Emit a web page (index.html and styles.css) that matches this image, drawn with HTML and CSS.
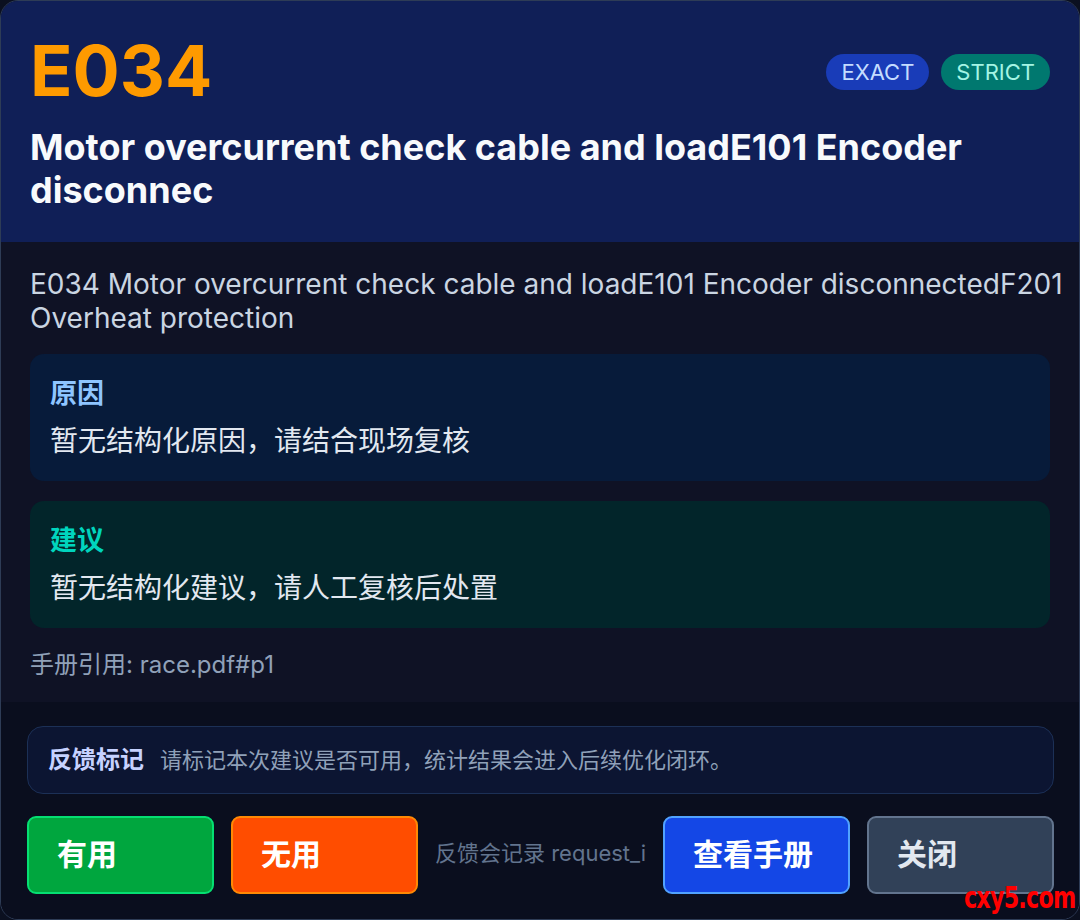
FILE: index.html
```html
<!DOCTYPE html>
<html lang="zh-CN">
<head>
    <meta charset="UTF-8">
    <meta name="viewport" content="width=device-width, initial-scale=1.0">
    <title>E034 故障详情</title>
    <link rel="stylesheet" href="styles.css">
</head>
<body>
    <div class="card">
        <div class="card-head">
            <div class="head-top">
                <div class="code">E034</div>
                <div class="badges">
                    <span class="badge badge-exact">EXACT</span>
                    <span class="badge badge-strict">STRICT</span>
                </div>
            </div>
            <h1 class="title">Motor overcurrent check cable and loadE101 Encoder disconnec</h1>
        </div>

        <div class="card-body">
            <p class="desc">E034 Motor overcurrent check cable and loadE101 Encoder disconnectedF201 Overheat protection</p>

            <div class="info-box cause">
                <div class="info-label">原因</div>
                <div class="info-text">暂无结构化原因，请结合现场复核</div>
            </div>

            <div class="info-box advice">
                <div class="info-label">建议</div>
                <div class="info-text">暂无结构化建议，请人工复核后处置</div>
            </div>

            <div class="cite">手册引用: race.pdf#p1</div>
        </div>

        <div class="card-foot">
            <div class="feedback">
                <span class="feedback-label">反馈标记</span>
                <span class="feedback-text">请标记本次建议是否可用，统计结果会进入后续优化闭环。</span>
            </div>
            <div class="actions">
                <button class="btn btn-useful">有用</button>
                <button class="btn btn-useless">无用</button>
                <div class="note">反馈会记录 request_id</div>
                <button class="btn btn-manual">查看手册</button>
                <button class="btn btn-close">关闭</button>
            </div>
        </div>

        <div class="watermark">cxy5.com</div>
    </div>
</body>
</html>
```

FILE: styles.css
```css
* {
    box-sizing: border-box;
}
body {
    margin: 0;
    background: #0b1020;
    font-family: Inter, "Noto Sans CJK SC", sans-serif;
    color: #e2e8f0;
}
.card {
    position: relative;
    width: 1080px;
    height: 920px;
    display: flex;
    flex-direction: column;
    border: 1px solid #2e3c56;
    border-radius: 18px;
    overflow: hidden;
    background: #0f1225;
}

/* header */
.card-head {
    background: #101f57;
    padding: 35px 29px 30px 29px;
}
.head-top {
    display: flex;
    justify-content: space-between;
    align-items: center;
}
.code {
    font-size: 70px;
    line-height: 1;
    font-weight: 700;
    color: #fe9a00;
}
.badges {
    display: flex;
    gap: 12px;
    margin-top: 2px;
}
.badge {
    height: 36px;
    padding: 0 15px;
    border-radius: 18px;
    font-size: 22px;
    line-height: 36px;
}
.badge-exact {
    background: #193cb8;
    color: #c4dcff;
}
.badge-strict {
    background: #00786f;
    color: #a4f4e4;
}
.title {
    margin: 20px 0 0 0;
    font-size: 36px;
    line-height: 43px;
    font-weight: 700;
    color: #f8fafc;
}

/* body */
.card-body {
    flex: 1;
    padding: 25px 29px 0 29px;
}
.desc {
    margin: 0 -30px 19px 0;
    font-size: 28px;
    line-height: 34px;
    color: #cad5e2;
}
.info-box {
    border-radius: 14px;
    padding: 22px 20px 21px 20px;
    margin-bottom: 20px;
}
.cause {
    background: #071b3a;
}
.advice {
    background: #02252a;
}
.info-label {
    font-size: 27px;
    line-height: 36px;
    font-weight: 700;
}
.cause .info-label {
    color: #8ec5ff;
}
.advice .info-label {
    color: #00d5be;
}
.info-text {
    margin-top: 10px;
    font-size: 28px;
    line-height: 38px;
    color: #e2e8f0;
}
.cite {
    font-size: 24px;
    line-height: 34px;
    color: #90a1b9;
}

/* footer */
.card-foot {
    background: #0a0e1e;
    padding: 24px 25px 25px 26px;
}
.feedback {
    height: 68px;
    display: flex;
    align-items: center;
    gap: 16px;
    padding: 0 20px 5px 20px;
    border: 1px solid #1c3056;
    border-radius: 16px;
    background: #0c1532;
}
.feedback-label {
    font-size: 24px;
    font-weight: 700;
    color: #c6d2ff;
}
.feedback-text {
    font-size: 22px;
    color: #90a1b9;
}
.actions {
    display: flex;
    align-items: center;
    gap: 17px;
    margin-top: 22px;
}
.btn {
    flex: none;
    width: 187px;
    height: 78px;
    padding: 0 0 6px 28px;
    border: 2px solid;
    border-radius: 9px;
    font-family: Inter, "Noto Sans CJK SC", sans-serif;
    font-size: 30px;
    font-weight: 700;
    text-align: left;
    color: #ffffff;
    cursor: pointer;
}
.btn-useful {
    background: #00a63e;
    border-color: #05df72;
}
.btn-useless {
    background: #ff4d00;
    border-color: #ff8904;
}
.btn-manual {
    background: #1447e6;
    border-color: #51a2ff;
}
.btn-close {
    background: #314158;
    border-color: #62748e;
    color: #e2e8f0;
}
.note {
    flex: 1;
    min-width: 0;
    height: 34px;
    white-space: nowrap;
    overflow: hidden;
    font-size: 22px;
    line-height: 30px;
    color: #62748e;
}

.watermark {
    position: absolute;
    right: 4px;
    bottom: 4px;
    font-family: "DejaVu Sans Condensed", "DejaVu Sans", sans-serif;
    font-size: 31px;
    font-weight: 700;
    letter-spacing: -1px;
    color: #ff0000;
    transform: scaleX(0.8);
    transform-origin: right bottom;
}
```
